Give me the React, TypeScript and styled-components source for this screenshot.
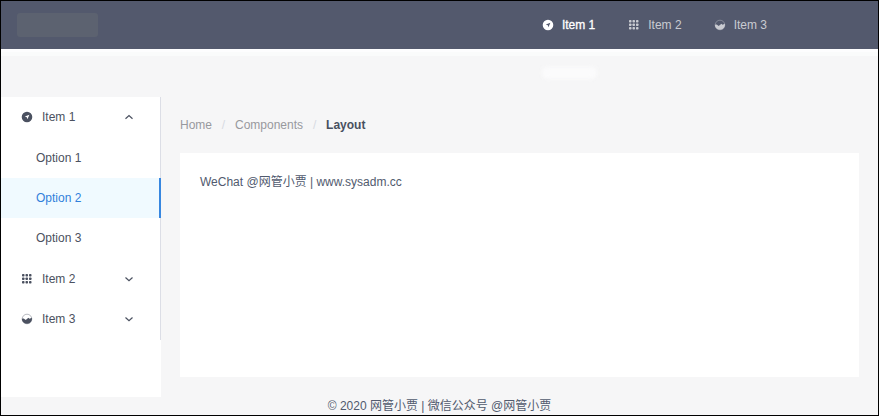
import React from 'react';
import styled, { createGlobalStyle } from 'styled-components';

const GlobalStyle = createGlobalStyle`
  * { box-sizing: border-box; }
  body { margin: 0; background: #f6f6f7; }
`;

const Page = styled.div`
  width: 879px;
  height: 416px;
  border: 1px solid #000;
  background: #f6f6f7;
  color: #515a6e;
  font: 12px/18px "Liberation Sans", Arial, "Noto Sans CJK SC", sans-serif;
  overflow: hidden;
  display: flex;
  flex-direction: column;
`;

const Header = styled.header`
  height: 48px;
  flex: none;
  background: #53596d;
  display: flex;
  justify-content: space-between;
  align-items: center;
  padding: 0 111px 0 16px;
`;

const Logo = styled.div`
  width: 81px;
  height: 24px;
  border-radius: 3px;
  background: #5c6270;
`;

const Nav = styled.nav`
  display: flex;
  gap: 32px;
`;

const NavItem = styled.a<{ $active?: boolean }>`
  display: flex;
  align-items: center;
  gap: 8px;
  color: ${(p) => (p.$active ? '#fff' : '#c9cbd1')};
  -webkit-text-stroke: ${(p) => (p.$active ? '0.3px' : '0')};
  margin-right: ${(p) => (p.$active ? '1px' : '0')};
`;

const SubHeader = styled.div`
  height: 48px;
  flex: none;
  border-top: 3px solid #fdfdfe;
  background: linear-gradient(#fafbfb 4px, #f6f6f7 4px);
  padding: 15px 0 0 541px;
`;

const Reflection = styled.div`
  width: 55px;
  height: 12px;
  border-radius: 5px;
  background: #fbfbfc;
  filter: blur(2px);
`;

const Body = styled.div`
  height: 300px;
  flex: none;
  display: flex;
`;

const Sidebar = styled.aside`
  width: 160px;
  flex: none;
  background: #fff;
`;

const Menu = styled.div`
  height: 243px;
  border-right: 1px solid #dcdee6;
`;

const MenuTitle = styled.div<{ $height: number }>`
  height: ${(p) => p.$height}px;
  display: flex;
  align-items: center;
  padding: 0 25px 0 20px;
  color: #4b5160;

  &:first-child { padding-bottom: 1px; }
  & > span { flex: 1; margin-left: 9px; }
`;

const Option = styled.div<{ $active?: boolean }>`
  height: 40px;
  line-height: 40px;
  padding-left: 35px;
  margin-right: -1px;
  color: ${(p) => (p.$active ? '#3080db' : '#4b5160')};
  background: ${(p) => (p.$active ? '#f0faff' : 'transparent')};
  border-right: ${(p) => (p.$active ? '2px solid #3887e0' : 'none')};
`;

const Main = styled.main`
  flex: 1;
  padding: 0 19px;
`;

const Breadcrumb = styled.div`
  display: flex;
  height: 56px;
  align-items: center;
  color: #98999e;
`;

const Slash = styled.span`
  width: 23px;
  text-align: center;
  color: #d6dae2;
`;

const Current = styled.strong`
  color: #48505f;
`;

const Card = styled.section`
  height: 224px;
  padding: 20px;
  background: #fff;
`;

const Footer = styled.footer`
  height: 18px;
  flex: none;
  text-align: center;
`;

const Glyph = styled.svg`
  width: 12px;
  height: 12px;
  flex: none;
  fill: currentColor;
`;

const Compass = () => (
  <Glyph viewBox="0 0 12 12">
    <path fillRule="evenodd" d="M6 .7a5.3 5.3 0 1 0 0 10.6A5.3 5.3 0 0 0 6 .7Zm2.4 3L6.4 8.2 5.8 6.2 3.8 5.6Z" />
  </Glyph>
);

const Keypad = () => (
  <Glyph viewBox="0 0 12 12">
    {[1, 4.5, 8].map((y) => [1, 4.5, 8].map((x) => (
      <rect key={`${x}-${y}`} x={x} y={y} width="2.5" height="2.5" rx=".7" />
    )))}
  </Glyph>
);

const Analytics = () => (
  <Glyph viewBox="0 0 12 12">
    <circle cx="6" cy="6" r="4.8" fill="none" stroke="currentColor" strokeWidth=".6" opacity=".65" />
    <path d="M.8 5.8 2.7 5.6l2 1.3L7.4 4.8l1.1.9 2.4-1A5.1 5.1 0 1 1 .8 5.8Z" />
  </Glyph>
);

const Chevron = ({ up }: { up?: boolean }) => (
  <Glyph viewBox="0 0 12 12">
    <path
      d={up ? 'M2.5 7.8 6 4.5l3.5 3.3' : 'M2.5 4.5 6 7.8l3.5-3.3'}
      fill="none"
      stroke="currentColor"
      strokeWidth="1.2"
    />
  </Glyph>
);

export default function App() {
  return (
    <>
      <GlobalStyle />
      <Page>
        <Header>
          <Logo />
          <Nav>
            <NavItem $active><Compass />Item 1</NavItem>
            <NavItem><Keypad />Item 2</NavItem>
            <NavItem><Analytics />Item 3</NavItem>
          </Nav>
        </Header>
        <SubHeader><Reflection /></SubHeader>
        <Body>
          <Sidebar>
            <Menu>
              <MenuTitle $height={41}><Compass /><span>Item 1</span><Chevron up /></MenuTitle>
              <Option>Option 1</Option>
              <Option $active>Option 2</Option>
              <Option>Option 3</Option>
              <MenuTitle $height={41}><Keypad /><span>Item 2</span><Chevron /></MenuTitle>
              <MenuTitle $height={40}><Analytics /><span>Item 3</span><Chevron /></MenuTitle>
            </Menu>
          </Sidebar>
          <Main>
            <Breadcrumb>
              <span>Home</span><Slash>/</Slash><span>Components</span><Slash>/</Slash><Current>Layout</Current>
            </Breadcrumb>
            <Card>WeChat @网管小贾 | www.sysadm.cc</Card>
          </Main>
        </Body>
        <Footer>© 2020 网管小贾 | 微信公众号 @网管小贾</Footer>
      </Page>
    </>
  );
}
